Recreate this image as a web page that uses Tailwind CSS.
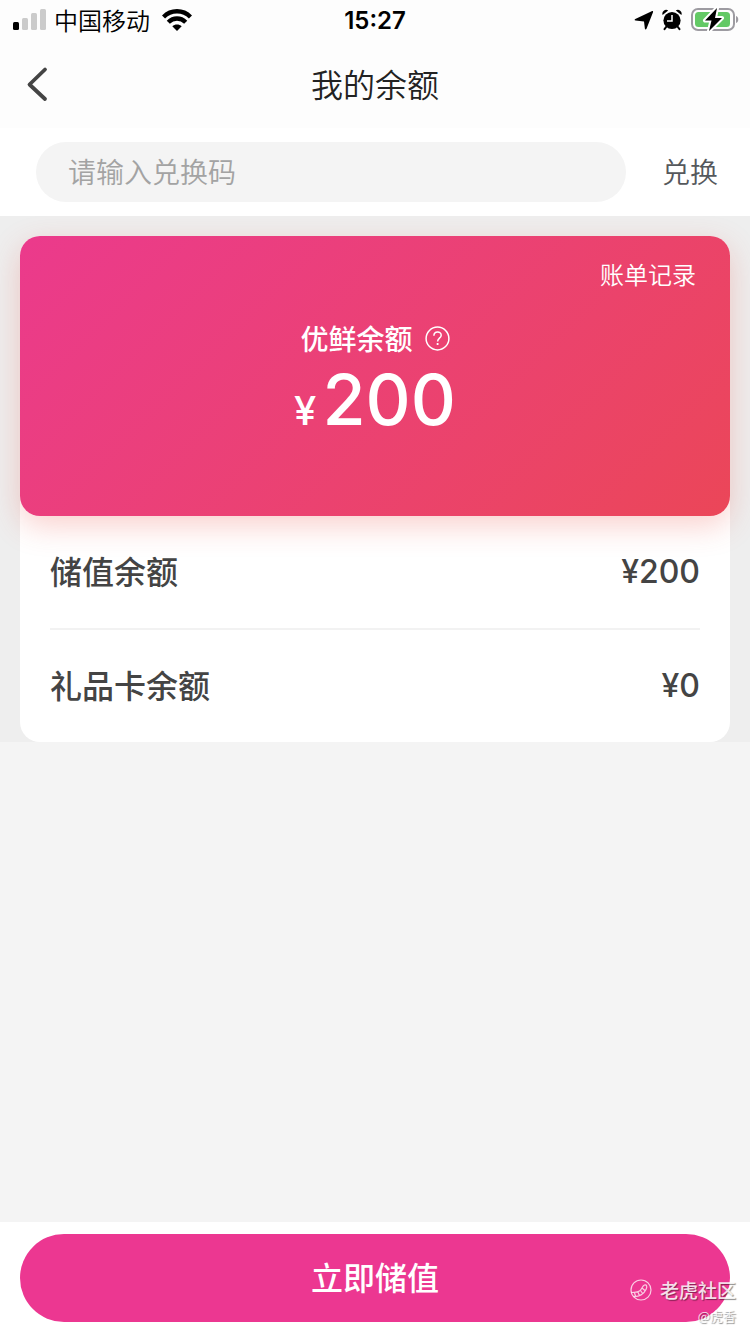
<!DOCTYPE html>
<html lang="zh-CN">
<head>
<meta charset="utf-8">
<meta name="viewport" content="width=device-width, initial-scale=1">
<title>我的余额</title>
<script src="https://cdn.jsdelivr.net/npm/@tailwindcss/browser@4"></script>
</head>
<body class="flex min-h-screen flex-col bg-[#f4f4f4] font-['Noto_Sans_CJK_SC',sans-serif] text-[#444]">
  <!-- Status bar -->
  <div class="grid h-10 grid-cols-3 items-center bg-[#fdfdfd] px-3 text-2xl text-black">
    <div class="flex items-center gap-2">
      <svg class="h-[22px] w-[34px]" viewBox="0 0 34 22" aria-hidden="true">
        <rect x="1" y="13" width="6" height="8" rx="1.5" fill="#000"/>
        <g fill="#cbcbcb"><rect x="10" y="9" width="6" height="12" rx="1.5"/><rect x="19" y="4" width="6" height="17" rx="1.5"/><rect x="28" y="0" width="6" height="21" rx="1.5"/></g>
      </svg>
      <span class="whitespace-nowrap leading-10 font-[350]">中国移动</span>
      <svg class="ml-1 h-[22px] w-[30px]" viewBox="0 0 30 22" aria-hidden="true">
        <g fill="none" stroke="#000" stroke-width="4.400"><path d="M1.500 8C9 .4 21 .4 28.500 8"/><path d="M6.300 13.200c5-5 12.400-5 17.400 0"/></g>
        <path d="M10.300 17.300c2.500-2.400 6.900-2.400 9.400 0L15 22z"/>
      </svg>
    </div>
    <div class="pt-0.5 text-center font-['Inter',sans-serif] font-semibold">15:27</div>
    <div class="-mr-0.5 flex items-center justify-end gap-2">
      <svg class="h-[20px] w-[20px]" viewBox="0 0 20 20" aria-hidden="true"><path d="M19 2.300 12.500 18.800c-.4.900-1.500.9-1.600 0L10 11.400 1.500 10.600c-1.100-.1-1.200-1.200-.2-1.600L17.700 1.200c.9-.4 1.700.2 1.300 1.100z"/></svg>
      <svg class="h-[22px] w-[20px]" viewBox="0 0 20 22" aria-hidden="true">
        <circle cx="10" cy="11.500" r="8.600"/>
        <path d="M.6 6A3.800 3.800 0 0 1 6.200 1.500zM19.400 6a3.800 3.800 0 0 0-5.600-4.500z"/>
        <path d="m4.500 17.500-2 2.700M15.500 17.500l2 2.700" stroke="#000" stroke-width="2" stroke-linecap="round"/>
        <path d="M10 6v6H5" fill="none" stroke="#fff" stroke-width="1.500"/>
      </svg>
      <svg class="h-[28px] w-[50px]" viewBox="0 0 50 28" aria-hidden="true">
        <rect x="2" y="3" width="42" height="21" rx="6" fill="none" stroke="#9d9ba1" stroke-width="2"/>
        <rect x="5" y="6" width="35" height="15" rx="3.500" fill="#63c965"/>
        <path d="M46 10c3 .8 3 6.200 0 7z" fill="#9d9ba1"/>
        <path d="M27 2 15 14.500h6.500L19 25l13-13h-7z" fill="#000" stroke="#fff" stroke-width="4" stroke-linejoin="round" paint-order="stroke"/>
      </svg>
    </div>
  </div>

  <header class="grid h-[88px] grid-cols-[96px_1fr_96px] items-center bg-[#fdfdfd]">
    <button type="button" aria-label="返回" class="flex h-20 items-center pl-6">
      <svg class="h-[36px] w-[26px]" viewBox="0 0 26 36" fill="none" stroke="#444" stroke-width="3.800" stroke-linecap="round" stroke-linejoin="round" aria-hidden="true"><path d="M21 3.500 5.500 18.500 21 33"/></svg>
    </button>
    <h1 class="pb-0.5 text-center text-[32px] font-[350] text-[#222]">我的余额</h1>
  </header>

  <form class="flex h-[88px] items-center bg-white pl-9">
    <input type="text" aria-label="兑换码" placeholder="请输入兑换码" class="h-[60px] min-w-0 flex-1 rounded-full bg-[#f4f4f4] px-8 pb-0.5 text-[28px] font-[350] outline-none placeholder:text-[#a3a3a3]">
    <button type="button" class="w-[124px] pb-0.5 pl-1 text-center text-[28px] font-[350] text-[#55585c]">兑换</button>
  </form>

  <main class="flex-1">
    <div class="overflow-hidden bg-[#eeeeee] px-5 pt-5">
      <div class="rounded-[20px] bg-white">
        <section class="flex h-[280px] flex-col rounded-[20px] bg-linear-135 from-[#eb3a8c] to-[#eb4658] text-white shadow-[0_10px_30px_rgba(235,70,60,0.25)]">
          <a href="#" class="mt-[18px] mr-[34px] self-end text-2xl leading-10 font-[350]">账单记录</a>
          <div class="mt-6 flex h-10 items-center justify-center gap-3">
            <h2 class="text-[28px] font-medium">优鲜余额</h2>
            <button type="button" aria-label="余额说明" class="size-[25px]">
              <svg class="size-[25px]" viewBox="0 0 25 25" fill="none" stroke="#fff" stroke-width="1.500" aria-hidden="true"><circle cx="12.500" cy="12.500" r="11.400"/><path d="M8.900 9.700c.1-5 7.300-4.900 7.300-.5 0 2.900-3.600 3-3.600 6.200"/><path d="M12.600 17v2" stroke-width="1.800"/></svg>
            </button>
          </div>
          <div class="mt-0.5 flex items-baseline justify-center gap-1.5 font-['Inter',sans-serif] font-medium leading-20"><span class="text-[40px]">¥</span><span class="text-[70px]">200</span></div>
        </section>
        <dl class="px-[30px] text-[32px] font-medium">
          <div class="flex h-[114px] items-center justify-between border-b-2 border-[#f2f2f2]">
            <dt class="pb-1">储值余额</dt><dd class="font-['Inter',sans-serif]">¥200</dd>
          </div>
          <div class="flex h-28 items-center justify-between">
            <dt class="pb-1">礼品卡余额</dt><dd class="font-['Inter',sans-serif]">¥0</dd>
          </div>
        </dl>
      </div>
    </div>
  </main>

  <footer class="relative bg-white px-5 py-3">
    <button type="button" class="h-[88px] w-full rounded-full bg-[#ec3791] pb-1 text-[32px] font-medium text-white">立即储值</button>
    <!-- Watermark -->
    <div class="pointer-events-none absolute right-3.5 bottom-2 flex flex-col items-end text-white/85 [text-shadow:1px_1px_1px_rgba(0,0,0,0.45)]">
      <div class="flex items-center gap-2 text-[19px] leading-8 font-medium">
        <svg class="size-[22px]" viewBox="0 0 22 22" fill="none" stroke="#fff" stroke-opacity=".75" stroke-width="1.200" aria-hidden="true"><circle cx="11" cy="11" r="10"/><path d="M1.500 13.500c3-.5 5.500.2 8-1.500 2.500-1.600 2.500-5 5-6 2.200-.5 3 1.500 1.500 4.500-2 4.500-7 7.500-12.500 7M4.500 13.500l1 4M8 13l1.500 4M10.500 11.500l2.500 3.500M12 9l3.500 3"/></svg>
        <span>老虎社区</span>
      </div>
      <span class="text-[13px] leading-5">@虎香</span>
    </div>
  </footer>
</body>
</html>
